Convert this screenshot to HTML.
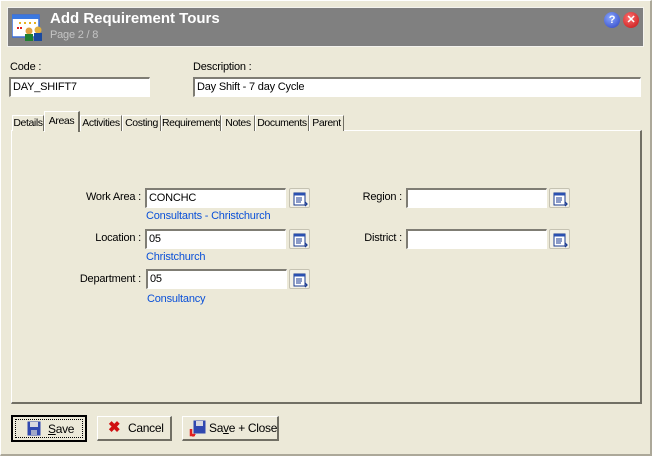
<!DOCTYPE html>
<html><head><style>
*{box-sizing:border-box;margin:0;padding:0}
body{width:652px;height:456px;background:#ECE9D8;font-family:"Liberation Sans",sans-serif;font-size:11px;color:#000;position:relative;overflow:hidden;white-space:nowrap;letter-spacing:-0.2px}
.a{position:absolute}
.win{left:0;top:0;width:652px;height:456px;border-right:2px solid #aca899;border-bottom:2px solid #aca899;border-left:1px solid #fff;border-top:1px solid #fff}
.hdr{left:7px;top:7px;width:637px;height:40px;background:#808080;border:1px solid #f4f3ee}
.inp{background:#fff;border-top:2px solid #7f7d74;border-left:2px solid #7f7d74;border-right:1px solid #fff;border-bottom:1px solid #fff;padding:1px 2px;font-size:11px;line-height:14px;height:20px}
.tab{top:113px;height:18px;border:1px solid #fff;border-right:1px solid #716f64;border-bottom:none;text-align:center;line-height:16px;background:#ECE9D8;font-size:10.5px;letter-spacing:-0.4px;overflow:hidden}
.panel{left:11px;top:130px;width:631px;height:274px;border-left:1px solid #fff;border-top:1px solid #fff;border-right:2px solid #716f64;border-bottom:2px solid #716f64}
.lbl{text-align:right;width:120px}
.blue{color:#0a50d8}
.pb{width:21px;height:20px;border:1px solid #c5c2b2;border-radius:2px;background:#f3f1e6}
.btn{top:416px;height:25px;border:1px solid #fff;border-right:2px solid #716f64;border-bottom:2px solid #716f64;background:#ECE9D8;font-size:12px;line-height:22px;letter-spacing:-0.3px}
</style></head><body>
<div class="a win"></div>
<div class="a hdr"></div>
<svg class="a" style="left:12px;top:14px" width="34" height="28" viewBox="0 0 34 28">
<rect x="0" y="1" width="27" height="22" fill="#fff" stroke="#3a6ed8" stroke-width="1.5"/>
<rect x="0" y="1" width="27" height="4" fill="#3a78e0"/>
<g fill="#e8b020"><rect x="7" y="8" width="2" height="2"/><rect x="12" y="8" width="2" height="2"/><rect x="17" y="8" width="2" height="2"/><rect x="22" y="8" width="2" height="2"/></g>
<g fill="#e02020"><rect x="5" y="13" width="2" height="2"/><rect x="8" y="13" width="2" height="2"/></g>
<circle cx="17" cy="17" r="3.5" fill="#e0a040"/><rect x="13" y="20" width="8" height="7" fill="#208030"/>
<circle cx="26" cy="16" r="3.5" fill="#e0b040"/><rect x="22" y="19" width="8" height="8" fill="#1a4aa0"/>
</svg>
<div class="a" style="left:50px;top:10px;color:#fff;font-weight:bold;font-size:15px;letter-spacing:0">Add Requirement Tours</div>
<div class="a" style="left:50px;top:29px;color:#c4c4c4;font-size:11px">Page 2 / 8</div>
<div class="a" style="left:604px;top:12px;width:16px;height:16px;border-radius:50%;background:radial-gradient(circle at 40% 35%,#8aa8ff,#2a40c0);color:#fff;font-weight:bold;font-size:11px;text-align:center;line-height:16px">?</div>
<div class="a" style="left:623px;top:12px;width:16px;height:16px;border-radius:50%;background:radial-gradient(circle at 40% 35%,#ff7070,#c01010);color:#fff;font-weight:bold;font-size:11px;text-align:center;line-height:16px">✕</div>

<div class="a" style="left:10px;top:61px">Code :</div>
<div class="a inp" style="left:9px;top:77px;width:141px">DAY_SHIFT7</div>
<div class="a" style="left:193px;top:61px">Description :</div>
<div class="a inp" style="left:193px;top:77px;width:448px">Day Shift - 7 day Cycle</div>

<div class="a panel"></div>
<div class="a tab" style="left:12px;width:32px;top:115px;height:16px;line-height:15px">Details</div>
<div class="a tab" style="left:80px;width:42px;top:115px;height:16px;line-height:15px">Activities</div>
<div class="a tab" style="left:122px;width:39px;top:115px;height:16px;line-height:15px">Costing</div>
<div class="a tab" style="left:161px;width:60px;top:115px;height:16px;line-height:15px">Requirements</div>
<div class="a tab" style="left:221px;width:34px;top:115px;height:16px;line-height:15px">Notes</div>
<div class="a tab" style="left:255px;width:54px;top:115px;height:16px;line-height:15px">Documents</div>
<div class="a tab" style="left:309px;width:35px;top:115px;height:16px;line-height:15px">Parent</div>
<div class="a tab" style="left:44px;width:36px;top:111px;height:21px;line-height:18px;border-right:2px solid #716f64">Areas</div>

<div class="a lbl" style="left:21px;top:191px">Work Area :</div>
<div class="a inp" style="left:145px;top:188px;width:141px">CONCHC</div>
<div class="a blue" style="left:146px;top:210px">Consultants - Christchurch</div>
<div class="a lbl" style="left:21px;top:232px">Location :</div>
<div class="a inp" style="left:145px;top:229px;width:141px">05</div>
<div class="a blue" style="left:146px;top:251px">Christchurch</div>
<div class="a lbl" style="left:21px;top:273px">Department :</div>
<div class="a inp" style="left:146px;top:269px;width:141px">05</div>
<div class="a blue" style="left:147px;top:293px">Consultancy</div>

<div class="a lbl" style="left:282px;top:191px">Region :</div>
<div class="a inp" style="left:406px;top:188px;width:141px"></div>
<div class="a lbl" style="left:282px;top:232px">District :</div>
<div class="a inp" style="left:406px;top:229px;width:141px"></div>

<svg width="0" height="0" style="position:absolute"><defs><g id="pk"><rect x="4" y="4" width="11" height="12" fill="#fff" stroke="#1a3a90"/><rect x="4" y="4" width="11" height="2.5" fill="#2a50b0"/><path d="M6 9h6M6 11h6M6 13h5" stroke="#1a3a90"/><path d="M15 13l2 2-2 2" stroke="#1a3a90" fill="none" stroke-width="1.3"/></g></defs></svg>
<div class="a pb" style="left:289px;top:188px"><svg width="21" height="20"><use href="#pk"/></svg></div>
<div class="a pb" style="left:289px;top:229px"><svg width="21" height="20"><use href="#pk"/></svg></div>
<div class="a pb" style="left:289px;top:269px"><svg width="21" height="20"><use href="#pk"/></svg></div>
<div class="a pb" style="left:549px;top:188px"><svg width="21" height="20"><use href="#pk"/></svg></div>
<div class="a pb" style="left:549px;top:229px"><svg width="21" height="20"><use href="#pk"/></svg></div>

<div class="a btn" style="left:11px;top:415px;width:76px;height:27px;border:2px solid #000"><div style="position:absolute;left:2px;top:2px;right:2px;bottom:2px;border:1px dotted #000"></div>
<svg class="a" style="left:14px;top:4px" width="14" height="15"><rect x="0.5" y="0.5" width="13" height="14" fill="#3048b0"/><rect x="3" y="1" width="8" height="5" fill="#d8d8e0"/><rect x="4" y="9" width="6" height="5" fill="#a0a8c8"/></svg>
<span class="a" style="left:35px;top:1px"><u>S</u>ave</span></div>
<div class="a btn" style="left:97px;width:75px"><span class="a" style="left:10px;top:0;color:#d01010;font-weight:bold;font-size:15px">✖</span><span class="a" style="left:30px;top:0">Cancel</span></div>
<div class="a btn" style="left:182px;width:97px">
<svg class="a" style="left:6px;top:3px" width="18" height="18"><rect x="4.5" y="0.5" width="12" height="13" fill="#3048b0"/><rect x="7" y="1" width="7" height="5" fill="#d8d8e0"/><path d="M2 9v6h4" stroke="#e02020" stroke-width="2.5" fill="none"/><path d="M1 14l3 3 3-3z" fill="#e02020"/></svg>
<span class="a" style="left:26px;top:0">Sa<u>v</u>e + Close</span></div>
</body></html>
